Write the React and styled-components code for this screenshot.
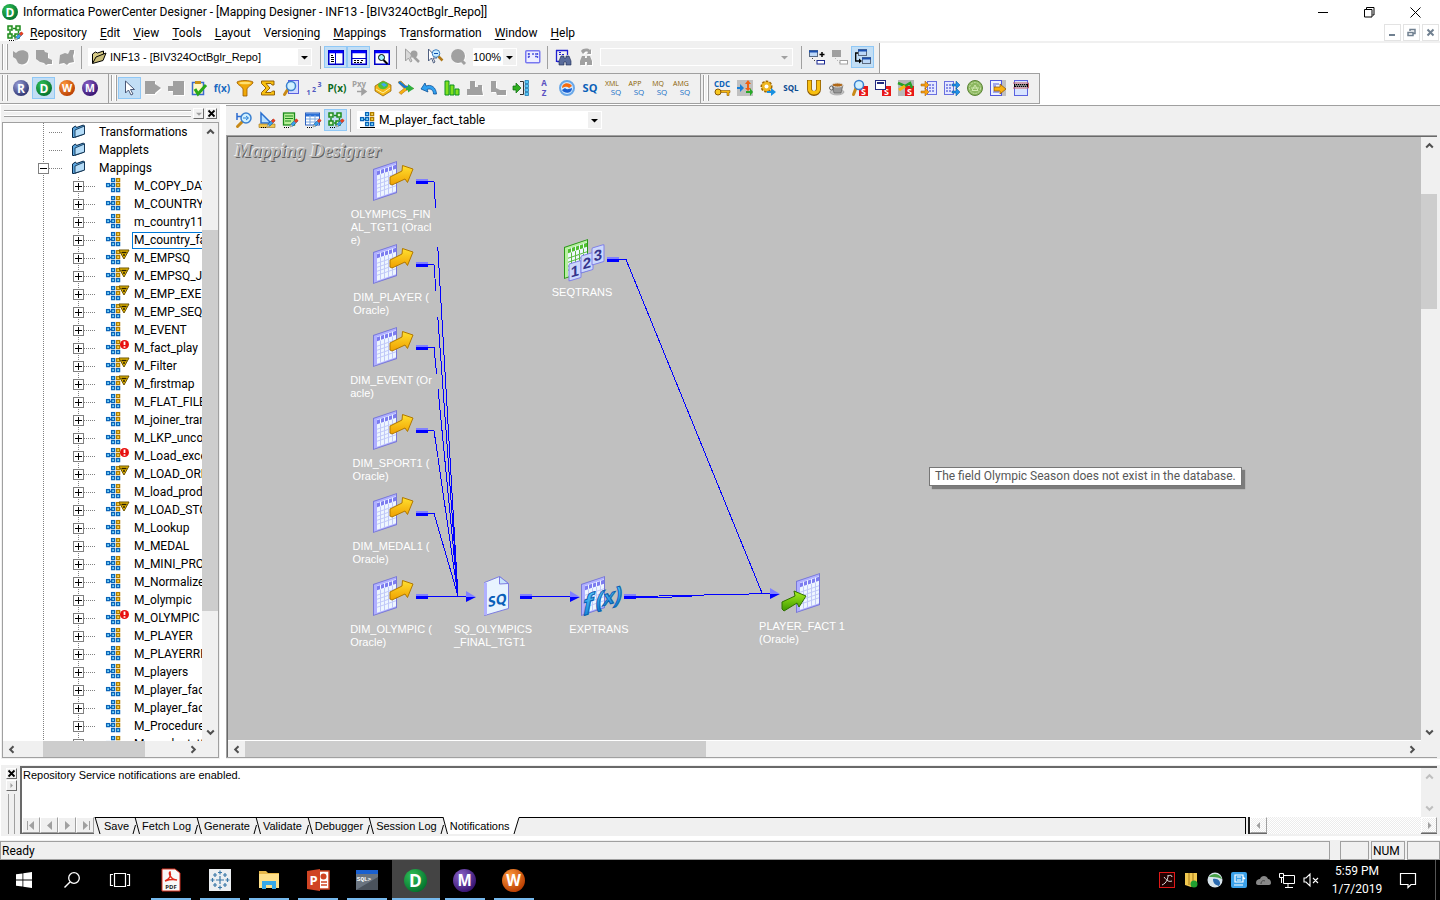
import React from "react";
import styled, { createGlobalStyle, css } from "styled-components";

const ui = `Roboto, "Open Sans", sans-serif`;
const sans = `"Liberation Sans", Arial, sans-serif`;
const face = "#f0f0f0";
const edge = "#a0a0a0";

const GlobalStyle = createGlobalStyle`
  * { box-sizing: border-box; }
  body { margin: 0; background: #fff; color: #000; font: 12px/16px ${ui}; }
  button, select { font: inherit; color: inherit; padding: 0; margin: 0; border: 0; background: none; border-radius: 0; }
  svg { display: block; flex: none; overflow: visible; }
`;

/* ---------- page ---------- */
const Page = styled.div`
  display: flex;
  flex-direction: column;
  height: 100vh;
  overflow: hidden;
`;
const TitleBar = styled.header`
  display: flex;
  align-items: center;
  height: 24px;
  padding-left: 2px;
  flex: none;
`;
const Title = styled.h1`
  margin: 0 auto 0 5px;
  font: 12px/16px ${ui};
  white-space: nowrap;
`;
const WindowButton = styled.button`
  display: grid;
  place-items: center;
  width: 46px;
  height: 22px;
`;
const WindowButtons = styled.div`
  display: flex;
  padding-right: 2px;
`;
const MenuBar = styled.nav`
  display: flex;
  align-items: center;
  height: 19px;
  padding: 0 1px 0 7px;
  border-bottom: 2px solid ${face};
  flex: none;
`;
const MenuItems = styled.div`
  display: flex;
  gap: 13px;
  margin: 0 auto 0 7px;
`;
const MenuItem = styled.button`
  line-height: 16px;
  white-space: nowrap;
  u { text-underline-offset: 2px; }
`;
const DocButtons = styled.div`
  display: flex;
  gap: 2px;
`;
const DocButton = styled.button`
  display: grid;
  place-items: center;
  width: 17px;
  height: 17px;
  border: 1px solid #e3e3e3;
`;

/* ---------- toolbars ---------- */
const ToolRow = styled.div`
  display: flex;
  flex: none;
`;
const Band = styled.div`
  display: flex;
  align-items: center;
  height: ${(p) => (p.$boxed ? 31 : 30)}px;
  padding-right: ${(p) => (p.$boxed ? 7 : 5)}px;
  padding-bottom: 2px;
  background: ${face};
  border: 0 solid ${edge};
  border-width: ${(p) => (p.$boxed ? "1px 1px 1px 0" : "0 1px 0 0")};
`;
const Grip = styled.div`
  width: 6px;
  height: 26px;
  margin: 0 1px 0 2px;
  border: 1px solid ${edge};
  border-width: 0 1px;
  box-shadow: inset 1px 0 #fff, inset -1px 0 #fff;
`;
const ToolButton = styled.button`
  display: grid;
  place-items: center;
  width: 23px;
  height: 22px;
  flex: none;
  ${(p) => p.$on && css`
    background: #c2def5;
    border: 1px solid #90c8f6;
  `}
`;
const Divider = styled.div`
  width: 1px;
  height: 23px;
  margin: 0 3px;
  background: ${edge};
  flex: none;
`;
const Combo = styled.label`
  display: flex;
  align-items: center;
  width: ${(p) => p.$width}px;
  height: 18px;
  margin: ${(p) => p.$margin || "0 5px 0 3px"};
  background: ${(p) => (p.$off ? face : "#fff")};
  border: ${(p) => (p.$off ? "1px solid #fff" : "0")};
  font: ${(p) => p.$font || `11px/16px ${sans}`};
  flex: none;
`;
const ComboIcon = styled.span`
  display: block;
  padding: 0 3px;
`;
const Picker = styled.select`
  appearance: none;
  flex: 1;
  min-width: 0;
  height: 16px;
  outline: 0;
`;
const Drop = styled.span`
  display: grid;
  place-items: center;
  width: 13px;
  height: 16px;
  margin-right: 1px;
  background: ${face};
`;

/* ---------- workspace ---------- */
const Workspace = styled.main`
  display: flex;
  gap: 6px;
  flex: 1;
  min-height: 0;
  margin-top: 1px;
  padding-left: 1px;
`;
const Navigator = styled.aside`
  display: flex;
  flex-direction: column;
  width: 219px;
  padding: 0 1px 1px;
  background: ${face};
  flex: none;
`;
const NavHead = styled.div`
  display: flex;
  align-items: center;
  gap: 2px;
  height: 17px;
  padding: 0 2px;
`;
const NavGrip = styled.div`
  flex: 1;
  height: 7px;
  border: 1px solid ${edge};
  border-width: 1px 0;
  box-shadow: inset 0 1px #fff, inset 0 -1px #fff;
`;
const TinyButton = styled.button`
  display: grid;
  place-items: center;
  width: 11px;
  height: 11px;
  border: 1px solid;
  border-color: #fff #696969 #696969 #fff;
  background: ${face};
`;
const NavFrame = styled.div`
  display: flex;
  flex-direction: column;
  flex: 1;
  min-height: 0;
  border: 1px solid ${edge};
`;
const ScrollSplit = styled.div`
  display: flex;
  flex: 1;
  min-height: 0;
`;
const Tree = styled.ul`
  flex: 1;
  min-width: 0;
  margin: 0;
  padding: 0;
  list-style: none;
  overflow: hidden;
  background: #fff;
`;
const TreeRow = styled.li`
  display: flex;
  align-items: center;
  height: 18px;
  padding-left: 35px;
  white-space: nowrap;
`;
const Trunk = styled.span`
  display: grid;
  place-items: center;
  width: 11px;
  height: 18px;
  flex: none;
  background: repeating-linear-gradient(#808080 0 1px, transparent 1px 2px) 5px 0 / 1px 100% no-repeat;
`;
const Dots = styled.span`
  width: ${(p) => p.$width}px;
  height: 1px;
  flex: none;
  margin-right: ${(p) => p.$after}px;
  background: repeating-linear-gradient(90deg, #808080 0 1px, transparent 1px 2px);
`;
const Expander = styled.button`
  display: grid;
  place-items: center;
  width: 11px;
  height: 11px;
  border: 1px solid #808080;
  background: #fff;
`;
const IconSlot = styled.span`
  display: flex;
  width: ${(p) => p.$width}px;
  height: 16px;
  flex: none;
`;
const TreeLabel = styled.span`
  flex: 1;
  height: 17px;
  padding: 0 1px;
  overflow: hidden;
  line-height: 15px;
  border: 1px solid ${(p) => (p.$selected ? "#0078d7" : "transparent")};
  border-right: 0;
`;

const Editor = styled.section`
  display: flex;
  flex-direction: column;
  flex: 1;
  min-width: 0;
  border-top: 1px solid ${edge};
  background: ${face};
`;
const EditorTools = styled.div`
  display: flex;
  align-items: center;
  height: 29px;
  padding: 0 0 1px 6px;
  flex: none;
`;
const CanvasFrame = styled.div`
  display: flex;
  flex-direction: column;
  flex: 1;
  min-height: 0;
  margin: 0 3px 1px 0;
  border: 0 solid ${edge};
  border-width: 1px 0 1px 1px;
  box-shadow: inset 1px 1px #696969;
  padding: 1px 0 0 1px;
`;
const Canvas = styled.div`
  position: relative;
  flex: 1;
  min-width: 0;
  overflow: hidden;
  background: #c0c0c0;
  border-bottom: 1px solid #fff;
`;
const Watermark = styled.div`
  padding: 4px 7px;
  font: italic bold 19px/20px "Liberation Serif", serif;
  color: #b8b8b8;
  text-shadow: 1px 1px #606060, -1px -1px #ececec;
`;
const Wires = styled.svg`
  position: absolute;
  left: 0;
  top: 0;
`;
const Node = styled.figure`
  position: absolute;
  left: ${(p) => p.$x}px;
  top: ${(p) => p.$y}px;
  display: flex;
  flex-direction: column;
  align-items: center;
  gap: 7px;
  width: 94px;
  margin: 0;
`;
const NodeLabel = styled.figcaption`
  display: flex;
  justify-content: center;
  width: 100%;
  background: #c0c0c0;
  color: #fff;
  font: 11px/13px ${sans};
  white-space: pre;
`;
const Tip = styled.div`
  position: absolute;
  left: 701px;
  top: 330px;
  padding: 0 5px;
  border: 1px solid #767676;
  background: #fff;
  color: #575757;
  line-height: 17px;
  white-space: nowrap;
  box-shadow: 3px 3px 1px #7c7c7c;
`;

/* ---------- scroll bars ---------- */
const Bar = styled.div`
  display: flex;
  flex-direction: ${(p) => (p.$across ? "row" : "column")};
  ${(p) => (p.$across ? "height: 16px;" : "width: 16px;")}
  margin-right: ${(p) => (p.$across ? 16 : 0)}px;
  flex: none;
  background: ${face};
`;
const Arrow = styled.button`
  display: grid;
  place-items: center;
  width: ${(p) => (p.$across ? 17 : 16)}px;
  height: ${(p) => (p.$across ? 16 : 17)}px;
  flex: none;
`;
const Span = styled.div`
  flex: ${(p) => p.$share} 1 0;
  background: ${(p) => (p.$thumb ? "#cdcdcd" : "transparent")};
`;

/* ---------- output panel, status bar ---------- */
const Output = styled.section`
  display: flex;
  height: 71px;
  margin: 6px 0 0 1px;
  padding: 1px 3px 2px 0;
  background: ${face};
  flex: none;
`;
const OutputSide = styled.div`
  display: flex;
  flex-direction: column;
  align-items: center;
  gap: 1px;
  width: 19px;
  padding: 2px 0 0 2px;
`;
const SideGrip = styled.div`
  width: 7px;
  flex: 1;
  margin-top: 2px;
  border: 1px solid ${edge};
  border-width: 0 1px;
`;
const OutputFrame = styled.div`
  display: flex;
  flex-direction: column;
  flex: 1;
  min-width: 0;
  border: 0 solid #696969;
  border-width: 2px 0 0 2px;
`;
const Log = styled.output`
  display: block;
  flex: 1;
  padding: 1px;
  background: #fff;
  font: 11px/13px ${sans};
`;
const TabStrip = styled.div`
  display: flex;
  height: 17px;
  font: 11px/16px ${sans};
`;
const StepButton = styled.button`
  display: grid;
  place-items: center;
  width: ${(p) => p.$width || 18}px;
  height: 16px;
  border: 1px solid;
  border-color: #fff ${edge} ${edge} #fff;
  box-shadow: 0 1px #696969;
  flex: none;
`;
const Tab = styled.button`
  height: 17px;
  padding: 0 3px 0 1px;
  border-top: 1px solid ${(p) => (p.$on ? "#fff" : "#000")};
  background: ${(p) => (p.$on ? "#fff" : face)};
  white-space: nowrap;
`;
const TabRest = styled.div`
  flex: 1;
  border: solid #000;
  border-width: 1px 1px 0 0;
  margin-right: 2px;
`;
const TabScroll = styled.div`
  display: flex;
  width: 189px;
  border-left: 2px solid #222;
  background: repeating-conic-gradient(#fff 0 25%, #ececec 0 50%) 0 0 / 2px 2px;
  justify-content: space-between;
`;
const Status = styled.footer`
  display: flex;
  gap: 2px;
  height: 20px;
  margin-top: 4px;
  padding-top: 1px;
  background: ${face};
  font: 12px/18px ${ui};
  flex: none;
`;
const StatusCell = styled.div`
  ${(p) => (p.$width ? `width: ${p.$width}px;` : "flex: 1; margin-right: 8px;")}
  padding-left: 1px;
  border: 1px solid ${edge};
`;

/* ---------- task bar ---------- */
const TaskBar = styled.nav`
  display: flex;
  height: 40px;
  background: #000;
  color: #fff;
  flex: none;
`;
const TaskButton = styled.button`
  display: grid;
  place-items: center;
  width: ${(p) => (p.$app ? 49 : 48)}px;
  height: 40px;
  ${(p) => p.$app && css`
    background: linear-gradient(#76b9ed, #76b9ed) center bottom / ${p.$on ? 48 : 40}px 2px no-repeat,
      linear-gradient(${p.$on ? "#444, #444" : "#000, #000"}) center / 48px 40px no-repeat;
  `}
`;
const Apps = styled.div`
  display: flex;
  margin: 0 auto 0 2px;
`;
const Tray = styled.div`
  display: flex;
  align-items: center;
  gap: 8px;
  padding-right: 12px;
`;
const Clock = styled.time`
  width: 60px;
  text-align: center;
  line-height: 18px;
  white-space: nowrap;
`;
const ActionCenter = styled.button`
  margin-left: 5px;
`;
const ShowDesktop = styled.button`
  width: 5px;
  height: 40px;
  margin-left: 7px;
  border-left: 1px solid #555;
`;

/* ---------- drawings ---------- */
const Svg = ({ s = 16, w, h, children, ...rest }) => (
  <svg width={w || s} height={h || s} viewBox={`0 0 ${w || s} ${h || s}`} aria-hidden="true" {...rest}>{children}</svg>
);
const T = ({ children, f = "#0a5fb4", size = 9, x = 8, y = 12, ...rest }) => (
  <text x={x} y={y} fill={f} fontSize={size} fontWeight="bold" textAnchor="middle" fontFamily="Open Sans, sans-serif" {...rest}>{children}</text>
);
const Orb = ({ letter, light, dark, s = 16 }) => (
  <Svg s={s} viewBox="0 0 16 16">
    <defs>
      <radialGradient id={`orb${letter}`} cx=".35" cy=".3" r=".75">
        <stop offset="0" stopColor={light} /><stop offset="1" stopColor={dark} />
      </radialGradient>
    </defs>
    <circle cx="8" cy="8" r="8" fill={`url(#orb${letter})`} />
    <T f="#fff" size={letter === "D" || letter === "R" ? 12 : 10.5} y={letter === "D" || letter === "R" ? 12.5 : 12}>{letter}</T>
  </Svg>
);
const orbs = {
  R: <Orb letter="R" light="#9aa0d8" dark="#2c3270" />,
  D: <Orb letter="D" light="#2fc057" dark="#04702c" />,
  W: <Orb letter="W" light="#ff9a3c" dark="#b83c00" />,
  M: <Orb letter="M" light="#8a62c8" dark="#35116e" />,
};
const Chevron = ({ dir, color = "#505050" }) => {
  const turn = { up: 0, right: 90, down: 180, left: 270 }[dir];
  return <Svg s={9}><path d="M1.2 6.5 4.5 3.2 7.8 6.5" transform={`rotate(${turn} 4.5 4.5)`} fill="none" stroke={color} strokeWidth="2" /></Svg>;
};
const Tri = ({ dir = "down", color = "#000", s = 7 }) => {
  const turn = { down: 0, left: 90, up: 180, right: 270 }[dir];
  return <Svg s={s} viewBox="0 0 7 7"><path d="M0 2h7L3.500 5.500z" transform={`rotate(${turn} 3.5 3.5)`} fill={color} /></Svg>;
};
const Pencil = () => (
  <g><path d="M8 15l1-3 5-5 2 2-5 5z" fill="#3aa0e8" stroke="#1a4c90" strokeWidth=".5" /><path d="M8 15l.8-2.500 1.700 1.700z" fill="#f0c890" /><path d="M12 9 14.500 6.500 16.500 8.500 14 11z" fill="#e84020" /><path d="M2 15.500h6" stroke="#000" strokeDasharray="1 1" /></g>
);
const Designer = () => (
  <Svg><g fill="#d8f8c8" stroke="#1d8a1d" strokeWidth="1.500"><path d="M6 3.500h4M3 6v4M11.500 6v2M6 11h2" fill="none" /><rect x="1" y="1" width="4" height="4" /><rect x="9" y="1" width="4" height="4" /><rect x="1" y="9" width="4" height="4" /><rect x="8" y="9" width="4" height="4" /></g><Pencil /></Svg>
);
const MapShape = () => (
  <g strokeWidth="1.300">
    <g stroke="#0b64b8" fill="#84e4ff">
      <path d="M4 7.500h2" fill="none" />
      <rect x=".6" y="5.600" width="3" height="3" /><rect x="5.600" y=".6" width="3" height="3" /><rect x="5.600" y="5.600" width="3" height="3" />
      <rect x="5.600" y="10.600" width="3" height="3" /><rect x="10.600" y="10.600" width="3" height="3" />
    </g>
    <g stroke="#b07c00" fill="#ffe050"><rect x="10.600" y=".6" width="3" height="3" /><rect x="10.600" y="5.600" width="3" height="3" /></g>
  </g>
);
const MapGlyph = ({ badge }) => (
  <Svg w={24} h={15}>
    <MapShape />
    {badge === "warn" && <g><path d="M13 0h10l-5 9z" fill="#e8b800" stroke="#6a5200" /><path d="M15.500 2.500h5M17 5h2" stroke="#2a2000" strokeWidth="1.300" /></g>}
    {badge === "error" && <g><circle cx="18.500" cy="4.500" r="4.500" fill="#e81010" /><path d="M18.500 1.500v3.500M18.500 6.200v1.500" stroke="#fff" strokeWidth="1.800" /></g>}
  </Svg>
);
const FolderGlyph = () => (
  <Svg s={15}><path d="M1.500 13.500V4l3-2 1 1.500 7-2.500 1 1v8l-10 3.500z" fill="#5aa4dc" stroke="#062848" /><path d="M4 13V6l9.500-4v8z" fill="#b4dcf8" stroke="#062848" strokeWidth=".8" /></Svg>
);
const OpenFolder = () => (
  <Svg><path d="M1.500 14V5l3-2 2 1 6-2v3" fill="#d8cc88" stroke="#000" /><path d="M1.500 14.500 5 8l10-4-3 7.500z" fill="#c8bc78" stroke="#000" /></Svg>
);
const g = "#a0a0a0";
const ghost = (d) => <Svg><path d={d} transform="translate(1 1)" fill="#fff" /><path d={d} fill={g} /></Svg>;
const RedS = () => <g><path d="M7 6h9v10H7z" fill="#e81818" /><T f="#fff" size={9} x={11.5} y={14.5}>S</T></g>;
const Lens = ({ x = 9, y = 6, r = 4.5 }) => (
  <g><path d={`M${x - 3} ${y + 3} 1.500 14.500`} stroke="#c88a18" strokeWidth="3" strokeLinecap="round" /><circle cx={x} cy={y} r={r} fill="#d0f0ff" stroke="#3a80d0" strokeWidth="1.500" /></g>
);
const Duo = ({ a }) => (
  <Svg w={18} h={16}><T f="#8a6000" size={7} x={8} y={6} fontWeight="normal">{a}</T><T f="#1a70c8" size={8} x={12} y={15} fontWeight="normal">SQ</T></Svg>
);
const Rows = ({ x }) => <g><rect x={x + 0.5} y="1.500" width="9" height="13" fill="#e4e8ff" stroke="#6a70e0" /><path d={`M${x + 2} 5h6M${x + 2} 8h6M${x + 2} 11h6`} stroke="#6a70e0" strokeWidth="1.500" strokeDasharray="2 1" /></g>;
const BlueBox = ({ x, y }) => <g><rect x={x + 0.5} y={y + 0.5} width="8" height="6" fill="#bcd8f8" stroke="#5a6a80" /><path d={`M${x} ${y + 1.5}h9`} stroke="#1a50b0" strokeWidth="2" /></g>;

const mainA = [
  ["Connect", ghost("M0 2l3 2c2-3 8-4 11-1 2 1 2 7 0 10-2 3-7 3-9 1L3 10 0 8z")],
  ["Disconnect", ghost("M0 1h8l1 2 3 1v5l4 2v4h-4l-2 1-2-2-4-1-4-3z")],
  ["Reconnect", ghost("M1 6l5-2 3 1 2-4h4v3l-1 3 1 6-5 1-2 2-3-2-5 1z")],
];
const mainB = [
  ["Navigator", true, <Svg><rect x=".75" y="1.750" width="14.500" height="13.500" fill="#fff" stroke="#0000c8" strokeWidth="1.500" /><path d="M1 3h14" stroke="#0000ff" strokeWidth="2.500" /><path d="M7.500 4v11" stroke="#0000c8" /><path d="M3 6.500h2M3 8.500h3M3 10.500h3M3 12.500h3" stroke="#000" /></Svg>],
  ["Output", true, <Svg><rect x=".75" y="1.750" width="14.500" height="13.500" fill="#fff" stroke="#0000c8" strokeWidth="1.500" /><path d="M1 3h14" stroke="#0000ff" strokeWidth="2.500" /><path d="M1 9.500h14" stroke="#0000c8" /><path d="M3 11.500h6M3 13.500h9M10 11.500h3" stroke="#000" strokeDasharray="2 1" /></Svg>],
  ["Overview", false, <Svg><rect x=".75" y="1.750" width="14.500" height="13.500" fill="#fff" stroke="#0000c8" strokeWidth="1.500" /><path d="M1 3h14" stroke="#0000ff" strokeWidth="2.500" /><circle cx="7.500" cy="8.500" r="3" fill="#a0f0f8" stroke="#000" /><path d="M9.500 11l4 4" stroke="#000" strokeWidth="2" /></Svg>],
];
const mainC = [
  ["Zoom out", <Svg><path d="M1.500 0v12l3-3 2 4 1.500-1-2-4h4z" fill="#d8d8d8" stroke={g} /><circle cx="10" cy="5" r="3.500" fill={g} /><path d="M10 8l5 5" stroke={g} strokeWidth="2.500" /></Svg>],
  ["Zoom in", <Svg><path d="M1.500 0v12l3-3 2 5 1.500-1-2-4h4z" fill="#fff" stroke="#506080" /><circle cx="9" cy="4.500" r="3.800" fill="#c8ecff" stroke="#4080c0" /><path d="M7 4.500h4" stroke="#0a50b0" /><path d="M11.500 7.500l4 4" stroke="#b07818" strokeWidth="2.500" /></Svg>],
  ["Zoom percent", <Svg><circle cx="8.500" cy="7.500" r="7.300" fill="#fff" /><circle cx="8" cy="7" r="7" fill={g} /><path d="M12 12l3 3" stroke={g} strokeWidth="3" /></Svg>],
];
const mainD = [
  ["Find in workspace", <Svg><path d="M1 1.500h12M1.500 1v12M12.500 1v5M2 12.500h2" stroke="#2020d0" strokeWidth="1.300" /><path d="M4 5.500h6M4 3.500h2" stroke="#2020d0" strokeDasharray="2 1" /><path d="M6 7h3v2h2V7h3l2 5v4h-5v-3H9v3H4v-4z" fill="#5a6c9a" stroke="#1a2850" strokeWidth=".6" /></Svg>],
  ["Find next", ghost("M3 2c2-3 7-3 9-1l1-1v5H9l1-2c-2-1-3 0-4 1l-1 1zM4 7h3v2h2V7h3l2 5v4h-5v-3H7v3H2v-4z")],
];
const mainE = [
  ["Add link", false, <Svg><BlueBox x={0} y={1} /><path d="M10.500 5.500h5M13 3v5" stroke="#000" strokeWidth="1.500" /><path d="M3 9l4 4" stroke="#000" strokeDasharray="1 2" /><rect x="8" y="11.500" width="7.500" height="3.500" fill="#fff" stroke="#1a2890" /></Svg>],
  ["Remove link", false, <Svg><path d="M0 1h9v7H0z" fill={g} /><path d="M3 9l5 5" stroke={g} strokeDasharray="1 2" /><rect x="8" y="11.500" width="7.500" height="3.500" fill="#fff" stroke={g} /></Svg>],
  ["Link path", true, <Svg><BlueBox x={3} y={0} /><BlueBox x={7} y={8} /><path d="M3 4H.7v8H5" fill="none" stroke="#000" strokeWidth="1.300" /><path d="M4 9.500l3 2.500-3 2.500z" /></Svg>],
];
const transforms = [
  ["Select", true, <Svg><path d="M3.500 1v12l3-3 2.500 5 2-1-2.500-4.500h4z" fill="#fff" stroke="#4a5878" /></Svg>],
  ["Source", false, ghost("M0 1h10v3l6 4-6 5v1H0z")],
  ["Target", false, ghost("M5 1h11v14H5v-4H0V6h5z")],
  ["Validate", false, <Svg><path d="M1.500 2.500h11v12h-11z" fill="#fff8c8" stroke="#3a6ad0" strokeWidth="1.500" /><path d="M4 1h6v3H4z" fill="#c89018" /><path d="M4 9l3 5 8-9" fill="none" stroke="#2aa818" strokeWidth="3" /></Svg>],
  ["Expression", false, <Svg><T size={10} f="#1768c0">f(x)</T></Svg>],
  ["Filter", false, <Svg><path d="M0 2c3-2 13-2 16 0 0 3-5 4-6 7v7H6V9C5 6 0 5 0 2z" fill="#f0a808" stroke="#9a5c00" strokeWidth=".8" /><ellipse cx="8" cy="3" rx="6" ry="1.300" fill="#ffe070" /></Svg>],
  ["Aggregator", false, <Svg><path d="M1.500 1h12.500v4h-2L11 3.500H6L10 8l-4.500 4.500H11l1.500-1.500H14.500v4H1.500v-2.500L6 8 1.500 3.500z" fill="#f8c010" stroke="#8a5800" strokeWidth=".9" /></Svg>],
  ["Lookup", false, <Svg><rect x="5.500" y=".5" width="10" height="13" fill="#d0d8ff" stroke="#5a60e0" /><Lens x={8} y={6} r={4.500} /></Svg>],
  ["Sequence", false, <Svg><T f="#5058c0" size={7} x={2.500} y={15}>1</T><T f="#5058c0" size={7} x={8} y={11.500}>2</T><T f="#5058c0" size={7} x={13.500} y={7}>3</T></Svg>],
  ["Procedure", false, <Svg w={18} h={16}><T f="#0a6a20" size={10} x={9}>P(x)</T></Svg>],
  ["External procedure", false, <Svg><T f={g} size={8} x={7} y={6.500}>Pxy</T><path d="M5 11.500h6M10 8.500l4 3-4 3z" stroke={g} strokeWidth="1.500" fill={g} /></Svg>],
  ["Router", false, <Svg><path d="M0 6l8-5 8 4v6l-8 5-8-5z" fill="#f4b818" stroke="#8a5800" strokeWidth=".7" /><path d="M3 5c1-4 8-5 10-1 1 3-3 6-6 5-2 0-4-2-4-4z" fill="#50c038" /><path d="M6 4l3-1 3 2-3 2z" fill="#40a8f0" /><path d="M1 9l7 4 7-5" fill="none" stroke="#fff0a0" /></Svg>],
  ["Union", false, <Svg><path d="M0 2l3-1 5 5 8 2.500-8 2-5 4-2-2 5-4z" fill="#f8b010" stroke="#a06000" strokeWidth=".5" /><path d="M1 2l6 5h5" fill="none" stroke="#1878d0" strokeWidth="2.500" /><path d="M10 4l6 4.500-6 4V10H8V7h2z" fill="#30b040" /></Svg>],
  ["Update strategy", false, <Svg><path d="M0 9l4-6 1 3c5-2 10 1 10.500 8l-3 0c0-4-3-6-6.500-4.500L7 12z" fill="#30a0f0" stroke="#0a5098" strokeWidth=".8" /></Svg>],
  ["Rank", false, <Svg><path d="M1 1h4v14H1zM6 5h4v10H6zM11 9h4v6h-4z" fill="#80e020" stroke="#0a9020" /></Svg>],
  ["Joiner", false, ghost("M3 1h5v6h3V5h4v5l1 5H0v-6h3z")],
  ["Normalizer", false, ghost("M1 1h5v7l4 2h6v5H7l-1-3H1z")],
  ["Sorter input", false, <Svg><path d="M0 6h3V3l5 5-5 5v-3H0z" fill="#30b020" stroke="#0a6a10" strokeWidth=".7" /><path d="M7 1.500h3.500v13H7" fill="none" stroke="#333" /><path d="M12 .5h3.500v3H12zM12 4.500h3.500v3H12zM12 8.500h3.500v3H12zM12 12.500h3.500v3H12z" fill="#58c8f8" stroke="#0a6aa8" strokeWidth=".7" /></Svg>],
  ["Sorter", false, <Svg><T f="#5a50c0" size={8} y={6}>A</T><T f="#5a50c0" size={8} y={16}>Z</T></Svg>],
  ["Transaction control", false, <Svg><circle cx="8" cy="8" r="7" fill="#d8ecff" stroke="#6aa8e8" strokeWidth="2" /><path d="M3 8c0-6 8-6 10-2l-3 2c-2-2-4-1-7 0z" fill="#f86c10" /><path d="M13 8c0 6-8 6-10 2l3-2c2 2 4 1 7 0z" fill="#1a60d0" /></Svg>],
  ["Source qualifier", false, <Svg><T size={11} f="#0a60b8" y={12}>SQ</T></Svg>],
  ["XML source qualifier", false, <Duo a="XML" />],
  ["Application source qualifier", false, <Duo a="APP" />],
  ["MQ source qualifier", false, <Duo a="MQ" />],
  ["AMG source qualifier", false, <Duo a="AMG" />],
];
const advanced = [
  ["CDC", <Svg><T size={8} f="#0a60b8" y={6.500}>CDC</T><circle cx="4" cy="12" r="3" fill="#f8c820" stroke="#8a5800" /><path d="M7 10.500h9v2h-1v3h-2v-3H7z" fill="#f8b810" stroke="#8a5800" strokeWidth=".6" /></Svg>],
  ["Router group", <Svg><path d="M0 0h16v16H0z" fill="#c0c0c0" /><path d="M0 7h3V4l4 4-4 4V9H0z" fill="#1880d8" /><path d="M11 0l3 4h-2v4h2l-3 3-3-3h2V4H8z" fill="#f06010" /><path d="M9 11h4V8l3 4-3 4v-3H9z" fill="#28a828" /></Svg>],
  ["Custom", <Svg><circle cx="6.500" cy="6.500" r="5" fill="#f0b820" stroke="#a06800" strokeWidth="2" strokeDasharray="2.500 1.200" /><circle cx="6.500" cy="6.500" r="4.500" fill="#f0b820" /><circle cx="6.500" cy="6.500" r="2" fill="#fff" /><path d="M7 11h4V8l5 4-5 4v-3H7z" fill="#1890e0" /></Svg>],
  ["SQL", <Svg w={18} h={16}><T size={8} f="#0a4a90" x={9} y={11}>SQL</T></Svg>],
  ["Union all", <Svg><path d="M3.500 0v9c0 6 9 6 9 0V0" fill="none" stroke="#8a5800" strokeWidth="5" /><path d="M3.500 .5V9c0 5 9 5 9 0V.5" fill="none" stroke="#f8c010" strokeWidth="3.500" /></Svg>],
  ["Java", <Svg><ellipse cx="8" cy="12" rx="7" ry="3" fill="#c4c4c4" stroke="#888" strokeWidth=".5" /><path d="M3 5h11l-2 8H5z" fill="#989898" stroke="#555" strokeWidth=".6" /><ellipse cx="8.500" cy="5" rx="5.500" ry="2" fill="#b06818" stroke="#ddd" /><circle cx="2.500" cy="8" r="2" fill="none" stroke="#666" /></Svg>],
  ["Lookup procedure", <Svg><RedS /><Lens x={7} y={5} r={4.500} /></Svg>],
  ["Target definition", <Svg><RedS /><rect x=".5" y=".5" width="10" height="9" fill="#fff" stroke="#222a80" /><path d="M2 3h7" stroke="#222a80" strokeWidth="2" /></Svg>],
  ["Filter definition", <Svg><path d="M0 0h16v16H0z" fill="#b8b8b8" /><RedS /><path d="M0 3l7 3 5-3 2 5" fill="none" stroke="#28a028" strokeWidth="2.500" /><path d="M1 10l6-4" stroke="#f8b810" strokeWidth="3" /></Svg>],
  ["Parser", <Svg><Rows x={6} /><path d="M0 4h4V1l4 4-4 4V6H0zM0 11h4V8l4 4-4 4v-3H0z" fill="#f8a010" stroke="#a05800" strokeWidth=".5" /></Svg>],
  ["Generator", <Svg><Rows x={0} /><path d="M8 4h4V1l4 4-4 4V6H8zM8 11h4V8l4 4-4 4v-3H8z" fill="#2090e8" stroke="#0a5090" strokeWidth=".5" /></Svg>],
  ["Web service", <Svg><circle cx="8" cy="8" r="7.500" fill="#8cb860" stroke="#5c8438" /><circle cx="8" cy="8" r="5.500" fill="none" stroke="#c8e0a8" strokeDasharray="2 1" /><path d="M5 10.500l3-5.500 3 5.500zM4 8h8" fill="none" stroke="#d0e8b0" /></Svg>],
  ["Data output", <Svg><path d="M11 0h5v16h-5z" fill="#c0c0c0" /><rect x=".5" y=".5" width="11" height="15" fill="#eef2ff" stroke="#5058e0" /><path d="M3 4h6M3 6h3M3 12h6" stroke="#5058e0" /><path d="M4 7h6V4l6 5-6 5v-3H4z" fill="#f8b010" stroke="#8a5000" strokeWidth=".7" /></Svg>],
  ["Data masking", <Svg><rect x="1.500" y=".5" width="13" height="15" fill="#d8e4ff" stroke="#5a62e0" /><path d="M0 3h15.500v5H0" fill="none" stroke="#c86060" /><path d="M1 5.500h14" stroke="#000" strokeWidth="3" /><path d="M2 5h12M3 6h12" stroke="#fff" strokeDasharray="1 1" /></Svg>],
];
const designers = [
  ["Source Analyzer", <Svg><path d="M1 1v7M1 4.500h5" stroke="#2a6ad0" strokeWidth="1.500" /><Lens x={10} y={6} r={5} /><path d="M7 6h5M10 4l2.500 2L10 8" fill="none" stroke="#2a80d8" /></Svg>],
  ["Target Designer", <Svg><path d="M2 1v10h10z" fill="#b8e0ff" stroke="#2a70d0" strokeWidth="1.500" /><path d="M0 12h16v3.500H0z" fill="#f0c850" stroke="#a07010" strokeWidth=".6" /><Pencil /></Svg>],
  ["Transformation Developer", <Svg><rect x="1.500" y="1" width="11" height="12" fill="#b8f098" stroke="#1a8a1a" strokeWidth="1.300" /><path d="M3 4h8M3 6.500h8M3 9h6" stroke="#1a8a1a" /><Pencil /></Svg>],
  ["Mapplet Designer", <Svg><rect x=".5" y="1" width="14" height="12" fill="#fff" stroke="#2a60c0" /><path d="M1 3h13" stroke="#2a70d8" strokeWidth="3" /><path d="M1 7h13M1 10h13M5 3v10M10 3v10" stroke="#7aa8e0" /><Pencil /></Svg>],
  ["Mapping Designer", <Designer />],
];

const Sheet = ({ x = 4, green }) => {
  const c = green ? ["#b8f0a0", "#2a9818", "#50c030", "#58b840"] : ["#b0b0ff", "#7878d8", "#7c7cf0", "#c0c8f8"];
  return (
    <g transform={`translate(${x} 8) skewY(-18.4)`}>
      <rect x=".5" y=".5" width="23" height="31" fill={c[0]} stroke={c[1]} />
      <rect x="4" y="3" width="19" height="27" fill="#eef6ff" />
      <path d="M4 5.500h19" stroke={c[2]} strokeWidth="4" strokeDasharray="3 1" />
      <path d="M4 12.500h19M4 16.500h19M4 20.500h19M4 24.500h19M7.500 8v22M11.500 8v22M15.500 8v22M19.500 8v22" stroke={c[3]} />
    </g>
  );
};
const NodeArt = ({ kind }) => (
  <Svg w={44} h={40}>
    <defs>
      <linearGradient id="gold" x2="0" y2="1"><stop stopColor="#ffe030" /><stop offset="1" stopColor="#f0a000" /></linearGradient>
      <linearGradient id="leaf" x2="0" y2="1"><stop stopColor="#a8f020" /><stop offset="1" stopColor="#3c9800" /></linearGradient>
      <linearGradient id="sky" x2="0" y2="1"><stop stopColor="#60d0ff" /><stop offset="1" stopColor="#0a78d0" /></linearGradient>
    </defs>
    {kind === "source" && <g><Sheet /><path d="M21 16l12-6 .5-5.500L44 8l-5.500 13.500L36 18l-13 6-2-1z" fill="url(#gold)" stroke="#b07800" /></g>}
    {kind === "target" && <g><Sheet x={16} /><path d="M2 29l13-6-1-5 12 5-7 11-2-4-13 8-2-2z" fill="url(#leaf)" stroke="#307000" /></g>}
    {kind === "sequence" && (
      <g>
        <Sheet green />
        {[[9, 25, 1], [21, 17, 2], [32, 9, 3]].map(([x, y, n]) => (
          <g key={n} transform={`translate(${x} ${y}) skewY(-16)`}>
            <rect width="12" height="17" rx="1" fill="#ccd8fc" stroke="#8080e8" />
            <T f="#34348c" size={15} x={6} y={14} fontFamily="Liberation Sans">{n}</T>
          </g>
        ))}
      </g>
    )}
    {kind === "qualifier" && (
      <g>
        <path d="M13.500 6.500l15-6 9 7v25l-24 7z" fill="#e8f4ff" stroke="#7c7ce0" />
        <path d="M14.500 7v32" stroke="#b0b0ff" strokeWidth="3" />
        <path d="M28.500.5v7.500l9-.5z" fill="#c8e4fc" stroke="#7c7ce0" />
        <g transform="translate(26.5 29) skewY(-14)"><T f="#0a60b8" size={14} x={0} y={0}>SQ</T></g>
      </g>
    )}
    {kind === "expression" && (
      <g>
        <Sheet />
        <g transform="translate(26 30) skewY(-16)" fill="url(#sky)" stroke="#0a60b0">
          <text x="-20" y="4" fontSize="29" fontWeight="bold" fontFamily="Liberation Sans" fontStyle="italic">f</text>
          <text x="-7" y="0" fontSize="21" fontWeight="bold" fontFamily="Liberation Sans" fontStyle="italic">(x)</text>
        </g>
      </g>
    )}
  </Svg>
);

const nodes = [
  ["source", 116, 24, "OLYMPICS_FIN\nAL_TGT1 (Oracl\ne)"],
  ["source", 116, 107, "DIM_PLAYER (\nOracle)"],
  ["source", 116, 190, "DIM_EVENT (Or\nacle)"],
  ["source", 116, 273, "DIM_SPORT1 (\nOracle)"],
  ["source", 116, 356, "DIM_MEDAL1 (\nOracle)"],
  ["source", 116, 439, "DIM_OLYMPIC (\nOracle)"],
  ["sequence", 307, 102, "SEQTRANS"],
  ["qualifier", 218, 439, "SQ_OLYMPICS\n_FINAL_TGT1"],
  ["expression", 324, 439, "EXPTRANS"],
  ["target", 527, 436, "PLAYER_FACT 1\n(Oracle)"],
];
const Port = ({ x, y }) => <g><path d={`M${x} ${y}h12v2h-12z`} fill="#8080ff" /><path d={`M${x} ${y + 2}h12v3h-12z`} fill="#00f" /></g>;
const Head = ({ x, y }) => <g><path d={`M${x} ${y - 6}v6h10z`} fill="#8080ff" /><path d={`M${x} ${y}v5l10-5z`} fill="#00f" /></g>;

const tree = [
  ["M_COPY_DATA"], ["M_COUNTRY"], ["m_country111"], ["M_country_fact", "", true], ["M_EMPSQ", "warn"], ["M_EMPSQ_JOIN", "warn"],
  ["M_EMP_EXE", "warn"], ["M_EMP_SEQ_", "warn"], ["M_EVENT"], ["M_fact_play", "error"], ["M_Filter", "warn"], ["M_firstmap", "warn"],
  ["M_FLAT_FILE"], ["M_joiner_trans"], ["M_LKP_uncon"], ["M_Load_excel", "error"], ["M_LOAD_ORD", "warn"], ["M_load_prod"],
  ["M_LOAD_STORE", "warn"], ["M_Lookup"], ["M_MEDAL"], ["M_MINI_PROJ"], ["M_Normalizer"], ["M_olympic"], ["M_OLYMPIC", "error"],
  ["M_PLAYER"], ["M_PLAYERRR"], ["M_players"], ["M_player_fact"], ["M_player_fact_table"], ["M_Procedure"], ["M_product_ttt"],
];
const menus = [
  ["", "R", "epository"], ["", "E", "dit"], ["", "V", "iew"], ["", "T", "ools"], ["", "L", "ayout"], ["Versio", "n", "ing"],
  ["", "M", "appings"], ["Tr", "a", "nsformation"], ["", "W", "indow"], ["", "H", "elp"],
];

const ScrollBar = ({ across, before, thumb, after, color }) => (
  <Bar $across={across}>
    <Arrow $across={across} aria-label={across ? "Scroll left" : "Scroll up"}><Chevron dir={across ? "left" : "up"} color={color} /></Arrow>
    <Span $share={before} />
    {thumb > 0 && <Span $share={thumb} $thumb />}
    <Span $share={after} />
    <Arrow $across={across} aria-label={across ? "Scroll right" : "Scroll down"}><Chevron dir={across ? "right" : "down"} color={color} /></Arrow>
  </Bar>
);
const Sign = ({ open }) => <Svg s={9}><path d={open ? "M1 4.500h7" : "M1 4.500h7M4.500 1v7"} stroke="#000" shapeRendering="crispEdges" /></Svg>;
const Slant = ({ kind }) => (
  <Svg w={9} h={17}>
    {kind === "before" && <path d="M3 0h6v17H7.500z" fill="#fff" />}
    {kind === "last" && <path d="M0 0h6L1 17H0z" fill="#fff" />}
    {kind === "last" && <path d="M1 17 6 .5h3" fill="none" stroke="#000" />}
    {kind === "first" && <path d="M1 0l5 17M1 .5h8" fill="none" stroke="#000" />}
    {(kind === "mid" || kind === "before") && <path d={`M1 17l2.500-9M3 0l4.500 17M0 .5h${kind === "mid" ? 9 : 3}`} fill="none" stroke="#000" />}
  </Svg>
);

export default function App() {
  const tabs = ["Save", "Fetch Log", "Generate", "Validate", "Debugger", "Session Log", "Notifications"];
  return (
    <>
      <GlobalStyle />
      <Page>
        <TitleBar>
          {orbs.D}
          <Title>Informatica PowerCenter Designer - [Mapping Designer - INF13 - [BIV324OctBglr_Repo]]</Title>
          <WindowButtons>
            <WindowButton aria-label="Minimize"><Svg s={11}><path d="M0 5.500h10" stroke="#000" /></Svg></WindowButton>
            <WindowButton aria-label="Restore"><Svg s={11}><path d="M.5 2.500h7.500v7.500H.5zM2.500 2V.5h7.500V8H8.500" fill="none" stroke="#000" /></Svg></WindowButton>
            <WindowButton aria-label="Close"><Svg s={11}><path d="M.5.5l10 10M10.500.5l-10 10" stroke="#000" /></Svg></WindowButton>
          </WindowButtons>
        </TitleBar>
        <MenuBar>
          <Designer />
          <MenuItems>
            {menus.map(([a, b, c]) => <MenuItem key={b + c}>{a}<u>{b}</u>{c}</MenuItem>)}
          </MenuItems>
          <DocButtons>
            <DocButton aria-label="Minimize document"><Svg s={9}><path d="M1 7h6" stroke="#708090" strokeWidth="2" /></Svg></DocButton>
            <DocButton aria-label="Restore document"><Svg s={9}><path d="M1 4.500h5v3H1zM3 3V1.500h5v4H6.500" fill="none" stroke="#708090" strokeWidth="1.500" /></Svg></DocButton>
            <DocButton aria-label="Close document"><Svg s={9}><path d="M1.500 1.500l6 6M7.500 1.500l-6 6" stroke="#708090" strokeWidth="2" /></Svg></DocButton>
          </DocButtons>
        </MenuBar>

        <ToolRow>
          <Band>
            <Grip />
            {mainA.map(([n, i]) => <ToolButton key={n} aria-label={n}>{i}</ToolButton>)}
            <Divider />
            <Combo $width={224}>
              <ComboIcon><OpenFolder /></ComboIcon>
              <Picker aria-label="Repository folder"><option>INF13 - [BIV324OctBglr_Repo]</option></Picker>
              <Drop><Tri /></Drop>
            </Combo>
            <Divider />
            {mainB.map(([n, on, i]) => <ToolButton key={n} $on={on} aria-label={n}>{i}</ToolButton>)}
            <Divider />
            {mainC.map(([n, i]) => <ToolButton key={n} aria-label={n}>{i}</ToolButton>)}
            <Combo $width={44} $margin="0 4px">
              <Picker aria-label="Zoom"><option>100%</option></Picker>
              <Drop><Tri /></Drop>
            </Combo>
            <ToolButton aria-label="Fit to window"><Svg><rect x=".75" y="1.750" width="14" height="12" rx="1" fill="#eef" stroke="#7878f0" strokeWidth="1.500" /><path d="M3 5h3M10 5h3M3 7.500h2.500M10 7.500h3M3.500 4v5M12.500 4v5M7 5h2" stroke="#5058e0" strokeWidth="1.300" strokeDasharray="2 1" /></Svg></ToolButton>
            <Divider />
            {mainD.map(([n, i]) => <ToolButton key={n} aria-label={n}>{i}</ToolButton>)}
            <Combo $width={193} $off>
              <Picker aria-label="Search text" disabled><option /></Picker>
              <Drop><Tri color={g} /></Drop>
            </Combo>
            <Divider />
            {mainE.map(([n, on, i]) => <ToolButton key={n} $on={on} aria-label={n}>{i}</ToolButton>)}
          </Band>
        </ToolRow>
        <ToolRow>
          <Band $boxed>
            <Grip />
            {Object.entries(orbs).map(([k, i]) => <ToolButton key={k} $on={k === "D"} aria-label={`Tool ${k}`}>{i}</ToolButton>)}
          </Band>
          <Band $boxed>
            <Grip />
            {transforms.map(([n, on, i]) => <ToolButton key={n} $on={on} aria-label={n}>{i}</ToolButton>)}
          </Band>
          <Band $boxed>
            <Grip />
            {advanced.map(([n, i]) => <ToolButton key={n} aria-label={n}>{i}</ToolButton>)}
          </Band>
        </ToolRow>

        <Workspace>
          <Navigator>
            <NavHead>
              <NavGrip />
              <TinyButton aria-label="Navigator options"><Tri color={g} s={6} /></TinyButton>
              <TinyButton aria-label="Close navigator"><Svg s={7}><path d="M.5.5l6 6M6.500.5l-6 6" stroke="#000" strokeWidth="1.800" /></Svg></TinyButton>
            </NavHead>
            <NavFrame>
              <ScrollSplit>
                <Tree>
                  {["Transformations", "Mapplets"].map((n) => (
                    <TreeRow key={n}>
                      <Trunk /><Dots $width={13} $after={9} />
                      <IconSlot $width={26}><FolderGlyph /></IconSlot>
                      <TreeLabel>{n}</TreeLabel>
                    </TreeRow>
                  ))}
                  <TreeRow>
                    <Trunk><Expander aria-label="Collapse Mappings"><Sign open /></Expander></Trunk><Dots $width={13} $after={9} />
                    <IconSlot $width={26}><FolderGlyph /></IconSlot>
                    <TreeLabel>Mappings</TreeLabel>
                  </TreeRow>
                  {tree.map(([n, badge, sel]) => (
                    <TreeRow key={n}>
                      <Trunk />
                      <Dots $width={0} $after={24} />
                      <Trunk><Expander aria-label={`Expand ${n}`}><Sign /></Expander></Trunk>
                      <Dots $width={12} $after={10} />
                      <IconSlot $width={26}><MapGlyph badge={badge} /></IconSlot>
                      <TreeLabel $selected={sel}>{n}</TreeLabel>
                    </TreeRow>
                  ))}
                </Tree>
                <ScrollBar before={90} thumb={382} after={113} />
              </ScrollSplit>
              <ScrollBar across before={23} thumb={101} after={40} />
            </NavFrame>
          </Navigator>

          <Editor>
            <EditorTools>
              {designers.map(([n, i]) => <ToolButton key={n} $on={n === "Mapping Designer"} aria-label={n}>{i}</ToolButton>)}
              <Divider />
              <Combo $width={245} $font={`12px/16px ${ui}`}>
                <ComboIcon><Svg><MapShape /><path d="M0 15.500h15" stroke="#000" /></Svg></ComboIcon>
                <Picker aria-label="Mapping"><option>M_player_fact_table</option></Picker>
                <Drop><Tri /></Drop>
              </Combo>
            </EditorTools>
            <CanvasFrame>
              <ScrollSplit>
                <Canvas>
                  <Watermark>Mapping Designer</Watermark>
                  <Wires width="620" height="600" aria-hidden="true">
                    <g transform="translate(-228 -137)">
                      <g stroke="#00f" fill="none" shapeRendering="crispEdges">
                        {[181, 264, 347, 430, 513].map((y) => <path key={y} d={`M428 ${y + 0.5}h6L458 596`} />)}
                        <path d="M428 596.500h40M532 596.500h40M619 259.500h7L762 593M636 596.500L772 593.500M636 597.500h26L702 595.500" />
                      </g>
                      {[161, 244, 327, 410, 493, 576].map((y) => <Port key={y} x={416} y={y + 18} />)}
                      <Port x={520} y={594} /><Port x={624} y={594} /><Port x={607} y={257} />
                      <Head x={466} y={597} /><Head x={570} y={597} /><Head x={770} y={594} />
                    </g>
                  </Wires>
                  {nodes.map(([kind, x, y, label]) => (
                    <Node key={label} $x={x} $y={y}><NodeArt kind={kind} /><NodeLabel>{label}</NodeLabel></Node>
                  ))}
                  <Tip role="tooltip">The field Olympic Season does not exist in the database.</Tip>
                </Canvas>
                <ScrollBar before={40} thumb={115} after={416} />
              </ScrollSplit>
              <ScrollBar across before={0} thumb={461} after={698} />
            </CanvasFrame>
          </Editor>
        </Workspace>

        <Output>
          <OutputSide>
            <TinyButton aria-label="Close output"><Svg s={7}><path d="M.5.5l6 6M6.500.5l-6 6" stroke="#000" strokeWidth="1.800" /></Svg></TinyButton>
            <TinyButton aria-label="Expand output"><Tri dir="right" color={g} s={5} /></TinyButton>
            <SideGrip />
          </OutputSide>
          <OutputFrame>
            <ScrollSplit>
              <Log>Repository Service notifications are enabled.</Log>
              <ScrollBar before={1} thumb={0} after={1} color="#bfbfbf" />
            </ScrollSplit>
            <TabStrip>
              {["First", "Previous", "Next", "Last"].map((n, i) => (
                <StepButton key={n} aria-label={`${n} tab`}>
                  <Svg s={11}>
                    <path d={i < 2 ? "M8 1v9L3 5.500z" : "M3 1v9l5-4.500z"} fill={g} />
                    {i === 0 && <path d="M1.500 1v9" stroke={g} />}
                    {i === 3 && <path d="M9.500 1v9" stroke={g} />}
                  </Svg>
                </StepButton>
              ))}
              {tabs.map((n, i) => (
                <React.Fragment key={n}>
                  <Slant kind={i === 0 ? "first" : i === 6 ? "before" : "mid"} />
                  <Tab $on={i === 6}>{n}</Tab>
                </React.Fragment>
              ))}
              <Slant kind="last" />
              <TabRest />
              <TabScroll>
                <StepButton $width={17} aria-label="Scroll tabs left"><Tri dir="left" color={g} /></StepButton>
                <StepButton $width={16} aria-label="Scroll tabs right"><Tri dir="right" color={g} /></StepButton>
              </TabScroll>
            </TabStrip>
          </OutputFrame>
        </Output>
        <Status>
          <StatusCell>Ready</StatusCell>
          <StatusCell $width={29} />
          <StatusCell $width={34}>NUM</StatusCell>
          <StatusCell $width={33} />
        </Status>

        <TaskBar>
          <TaskButton aria-label="Start"><Svg><path d="M0 2.300 6.500 1.400V7.600H0zM7.300 1.300 16 0v7.600H7.300zM0 8.400h6.500v6.200L0 13.700zM7.300 8.400H16V16l-8.700-1.300z" fill="#fff" /></Svg></TaskButton>
          <TaskButton aria-label="Search"><Svg><circle cx="10" cy="6" r="5.300" fill="none" stroke="#fff" strokeWidth="1.300" /><path d="M6 10 .5 15.500" stroke="#fff" strokeWidth="1.500" /></Svg></TaskButton>
          <TaskButton aria-label="Task view"><Svg s={20}><path d="M4.500 3.500h11v13h-11zM3 4.500H.5v11H3M17 4.500h2.500v11H17" fill="none" stroke="#fff" strokeWidth="1.200" /></Svg></TaskButton>
          <Apps>
            <TaskButton $app aria-label="PDF reader"><Svg s={22}><path d="M2 0h13l5 4v18H2z" fill="#f8f8f8" stroke="#d83020" /><path d="M5 12c5-2 6-6 5-9-2 1 1 8 7 8-5-1-9 0-12 1z" fill="none" stroke="#e02818" strokeWidth="1.500" /><T f="#222" size={6} x={11} y={20}>PDF</T></Svg></TaskButton>
            <TaskButton $app aria-label="Tableau"><Svg s={22}><path d="M0 0h22v22H0z" fill="#eceff2" /><path d="M11 7v8M7 11h8M11 1.500v4M9 3.500h4M11 16.500v4M9 18.500h4M3.500 9v4M1.500 11h4M18.500 9v4M16.500 11h4M6 4v4M4 6h4M16 4v4M14 6h4M6 14v4M4 16h4M16 14v4M14 16h4" stroke="#3a78a8" strokeWidth="1.200" /></Svg></TaskButton>
            <TaskButton $app aria-label="File Explorer"><Svg s={22}><path d="M1 2h7l2 2h11v15H1z" fill="#e8b84a" /><path d="M1 5h20v14H1z" fill="#ffe08a" /><path d="M4 20v-8h14v8h-4v-4H8v4z" fill="#38a8e8" /></Svg></TaskButton>
            <TaskButton $app aria-label="PowerPoint"><Svg s={24}><path d="M12 3h11v18H12z" fill="#fff" stroke="#d04423" strokeWidth="1.500" /><path d="M15 14h6M15 17h6" stroke="#d04423" strokeWidth="1.500" /><circle cx="17.500" cy="8.500" r="3" fill="#d04423" /><path d="M1 3l13-2v22L1 21z" fill="#d04423" /><T f="#fff" size={13} x={7.500} y={17}>P</T></Svg></TaskButton>
            <TaskButton $app aria-label="SQL Plus"><Svg s={22}><path d="M0 1h22v20H0z" fill="#6a7480" /><path d="M0 1h22v4H0z" fill="#1a60d0" /><path d="M0 21 22 8v13z" fill="#4a525c" /><T f="#fff" size={6} x={8} y={12} fontFamily="Liberation Mono">SQL&gt;</T></Svg></TaskButton>
            <TaskButton $app $on aria-label="Designer"><Orb letter="D" s={23} light="#2fc057" dark="#04702c" /></TaskButton>
            <TaskButton $app aria-label="Workflow Monitor"><Orb letter="M" s={23} light="#8a62c8" dark="#35116e" /></TaskButton>
            <TaskButton $app aria-label="Workflow Manager"><Orb letter="W" s={23} light="#ff9a3c" dark="#b83c00" /></TaskButton>
          </Apps>
          <Tray>
            <Svg><rect x=".5" y=".5" width="15" height="15" fill="#200" stroke="#e01818" /><path d="M3 13c5-2 6-7 6-10M5 5c3 4 5 5 8 4M9 4c2-1 4-1 4 1" fill="none" stroke="#ddd" /></Svg>
            <Svg><path d="M2 1h12v10l-6 4-6-2z" fill="#f0c850" /><path d="M6 1v12M10 1v12" stroke="#a87818" /><circle cx="11" cy="12" r="3.500" fill="#20a030" /></Svg>
            <Svg><circle cx="8" cy="8" r="7.500" fill="#d8e4ec" /><path d="M2 5c4-5 11-3 13 2-5-2-8-2-13-2z" fill="#48a048" /><path d="M6 7c5-1 9 3 6 7-4-1-6-3-6-7z" fill="#2a6ab0" /></Svg>
            <Svg><rect width="16" height="16" rx="2" fill="#3aa0e8" /><path d="M4 3h8v7H4zM6 5h4M6 8h4M3 13h9M12 5l2 2" fill="none" stroke="#fff" strokeWidth="1.200" /></Svg>
            <Svg><path d="M1 11c0-3 2-4 4-4 1-4 7-4 8 0 2 0 3 2 3 4 0 1-1 2-2 2H3c-1 0-2-1-2-2z" fill="#888" /><path d="M6 12c0-3 2-4 4-3" stroke="#444" fill="none" /></Svg>
            <Svg><path d="M4.500 3.500h11v8h-11zM9 12v3M6 15.500h8M.5 1.500h4v4h-4zM2.500 6v5" fill="none" stroke="#fff" /></Svg>
            <Svg><path d="M1 6h2l4-4v12l-4-4H1zM10 6l5 5M15 6l-5 5" fill="none" stroke="#fff" strokeWidth="1.100" /></Svg>
            <Clock>5:59 PM<br />1/7/2019</Clock>
            <ActionCenter aria-label="Notifications"><Svg><path d="M.5 1.500h15v11H11L8 15.500 8 12.500H.5z" fill="none" stroke="#fff" strokeWidth="1.200" /></Svg></ActionCenter>
          </Tray>
          <ShowDesktop aria-label="Show desktop" />
        </TaskBar>
      </Page>
    </>
  );
}
